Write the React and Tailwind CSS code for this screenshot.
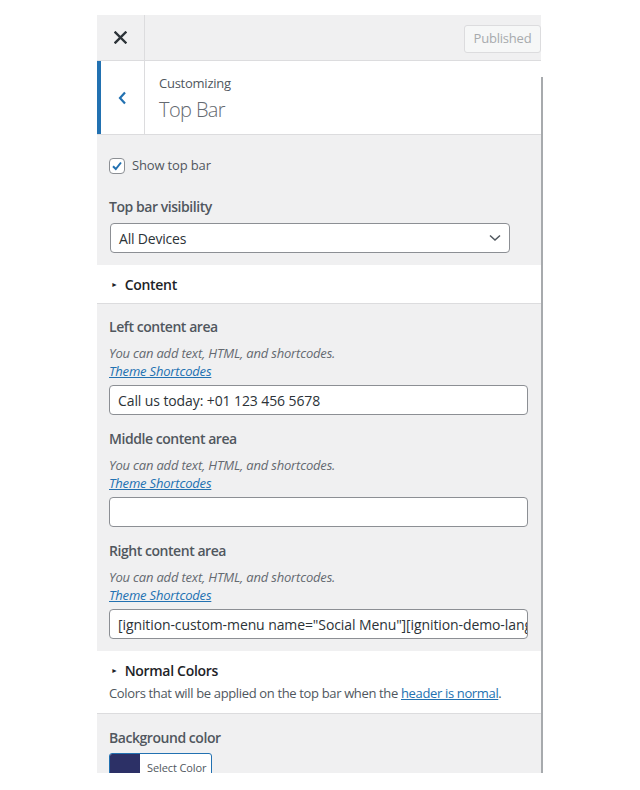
import React from "react";

const font = { fontFamily: '"Open Sans", "Noto Sans", sans-serif' };

function Field({ label, value }) {
  return (
    <div className="flex flex-col">
      <div className="h-[20px] text-[14px] leading-[20px] font-semibold tracking-[-0.45px] text-[#50575e]">{label}</div>
      <div className="mt-[7px] h-[18px] text-[13px] leading-[18px] italic tracking-[-0.18px] text-[#646970]">
        You can add text, HTML, and shortcodes.
      </div>
      <a href="#" className="h-[18px] w-fit text-[13px] leading-[18px] italic tracking-[-0.18px] text-[#2271b1] underline">
        Theme Shortcodes
      </a>
      <div className="mt-[5px] flex h-[30px] w-[419px] items-center overflow-hidden whitespace-nowrap rounded-[4px] border border-[#8c8f94] bg-white px-[8px] text-[14px] tracking-[-0.1px] text-[#2c3338]">
        {value}
      </div>
    </div>
  );
}

function SectionTitle({ children }) {
  return (
    <div className="flex h-[20px] items-center text-[14px] font-semibold tracking-[-0.3px] text-[#1d2327]">
      <span className="ml-[2px] mr-[7px] text-[7px] leading-none">&#9658;</span>
      {children}
    </div>
  );
}

export default function App() {
  return (
    <div className="min-h-[790px] bg-white pl-[97px] pt-[15px]" style={font}>
      <div className="flex h-[758px] w-[446px] overflow-hidden">
        <div className="flex w-[444px] flex-col bg-[#f0f0f1]">
          {/* top bar */}
          <div className="flex h-[46px] shrink-0 items-stretch border-b border-[#dcdcde] bg-[#f0f0f1]">
            <div className="flex w-[48px] items-center justify-center border-r border-[#dcdcde]">
              <svg width="13" height="13" viewBox="0 0 13 13">
                <path d="M1.5 1.5 L11.5 11.5 M11.5 1.5 L1.5 11.5" stroke="#2c3338" strokeWidth="2.4" strokeLinecap="square" />
              </svg>
            </div>
            <div className="flex flex-1 items-start justify-end pt-[10px]">
              <div className="flex h-[28px] w-[77px] items-center justify-center rounded-[3px] border border-[#dcdcde] bg-[#f6f7f7] text-[13px] tracking-[-0.2px] text-[#a7aaad]">
                Published
              </div>
            </div>
          </div>

          {/* header */}
          <div className="flex h-[74px] shrink-0 border-b border-[#dcdcde] bg-white">
            <div className="flex w-[48px] items-center justify-center border-l-[4px] border-r border-l-[#2271b1] border-r-[#dcdcde]">
              <svg width="9" height="14" viewBox="0 0 9 14">
                <path d="M7 1.5 L2 7 L7 12.5" fill="none" stroke="#2271b1" strokeWidth="2.2" />
              </svg>
            </div>
            <div className="flex flex-col pl-[14px] pt-[13px]">
              <div className="h-[18px] text-[13px] leading-[18px] tracking-[-0.25px] text-[#50575e]">Customizing</div>
              <div className="mt-[4px] text-[20px] font-light leading-[28px] tracking-[-0.6px] text-[#646970]">Top Bar</div>
            </div>
          </div>

          {/* gray section 1 */}
          <div className="flex shrink-0 flex-col px-[12px] pt-[23px] pb-[12px]">
            <div className="flex h-[16px] items-center">
              <div className="flex h-[16px] w-[16px] items-center justify-center rounded-[4px] border border-[#8c8f94] bg-white">
                <svg width="12" height="12" viewBox="0 0 12 12">
                  <path d="M2 6.2 L4.8 9 L10 2.5" fill="none" stroke="#2271b1" strokeWidth="2" />
                </svg>
              </div>
              <span className="ml-[7px] text-[13px] tracking-[-0.15px] text-[#50575e]">Show top bar</span>
            </div>
            <div className="mt-[23px] h-[20px] text-[14px] leading-[20px] font-semibold tracking-[-0.45px] text-[#50575e]">Top bar visibility</div>
            <div className="ml-[1px] mt-[6px] flex h-[30px] w-[400px] items-center justify-between rounded-[4px] border border-[#8c8f94] bg-white pl-[8px] pr-[8px] text-[14px] tracking-[-0.2px] text-[#2c3338]">
              <span>All Devices</span>
              <svg width="12" height="8" viewBox="0 0 12 8">
                <path d="M1 1.5 L6 6 L11 1.5" fill="none" stroke="#50575e" strokeWidth="1.5" />
              </svg>
            </div>
          </div>

          {/* Content section */}
          <div className="flex h-[39px] shrink-0 items-center border-b border-[#dcdcde] bg-white px-[12px]">
            <SectionTitle>Content</SectionTitle>
          </div>

          <div className="flex shrink-0 flex-col gap-[14px] px-[12px] pt-[13px] pb-[12px]">
            <Field label="Left content area" value="Call us today: +01 123 456 5678" />
            <Field label="Middle content area" value="" />
            <Field
              label="Right content area"
              value={'[ignition-custom-menu name="Social Menu"][ignition-demo-lang]'}
            />
          </div>

          {/* Normal colors section */}
          <div className="flex h-[63px] shrink-0 flex-col border-b border-[#dcdcde] bg-white px-[12px] pt-[9px]">
            <SectionTitle>Normal Colors</SectionTitle>
            <div className="mt-[4px] h-[18px] text-[13px] leading-[18px] tracking-[-0.35px] text-[#50575e]">
              Colors that will be applied on the top bar when the{" "}
              <a href="#" className="text-[#2271b1] underline">header is normal</a>.
            </div>
          </div>

          <div className="flex flex-col px-[12px] pt-[14px]">
            <div className="h-[20px] text-[14px] leading-[20px] font-semibold tracking-[-0.45px] text-[#50575e]">Background color</div>
            <div className="mt-[5px] flex h-[30px] w-[103px] overflow-hidden rounded-[3px] border border-[#2271b1] bg-white">
              <div className="w-[30px] bg-[#2c3066]" />
              <div className="flex items-center pl-[7px] text-[11px] tracking-[-0.1px] text-[#50575e]">Select Color</div>
            </div>
          </div>
        </div>
        <div className="flex w-[2px] flex-col pt-[62px]">
          <div className="flex-1 bg-[#a7aaad]" />
        </div>
      </div>
    </div>
  );
}
